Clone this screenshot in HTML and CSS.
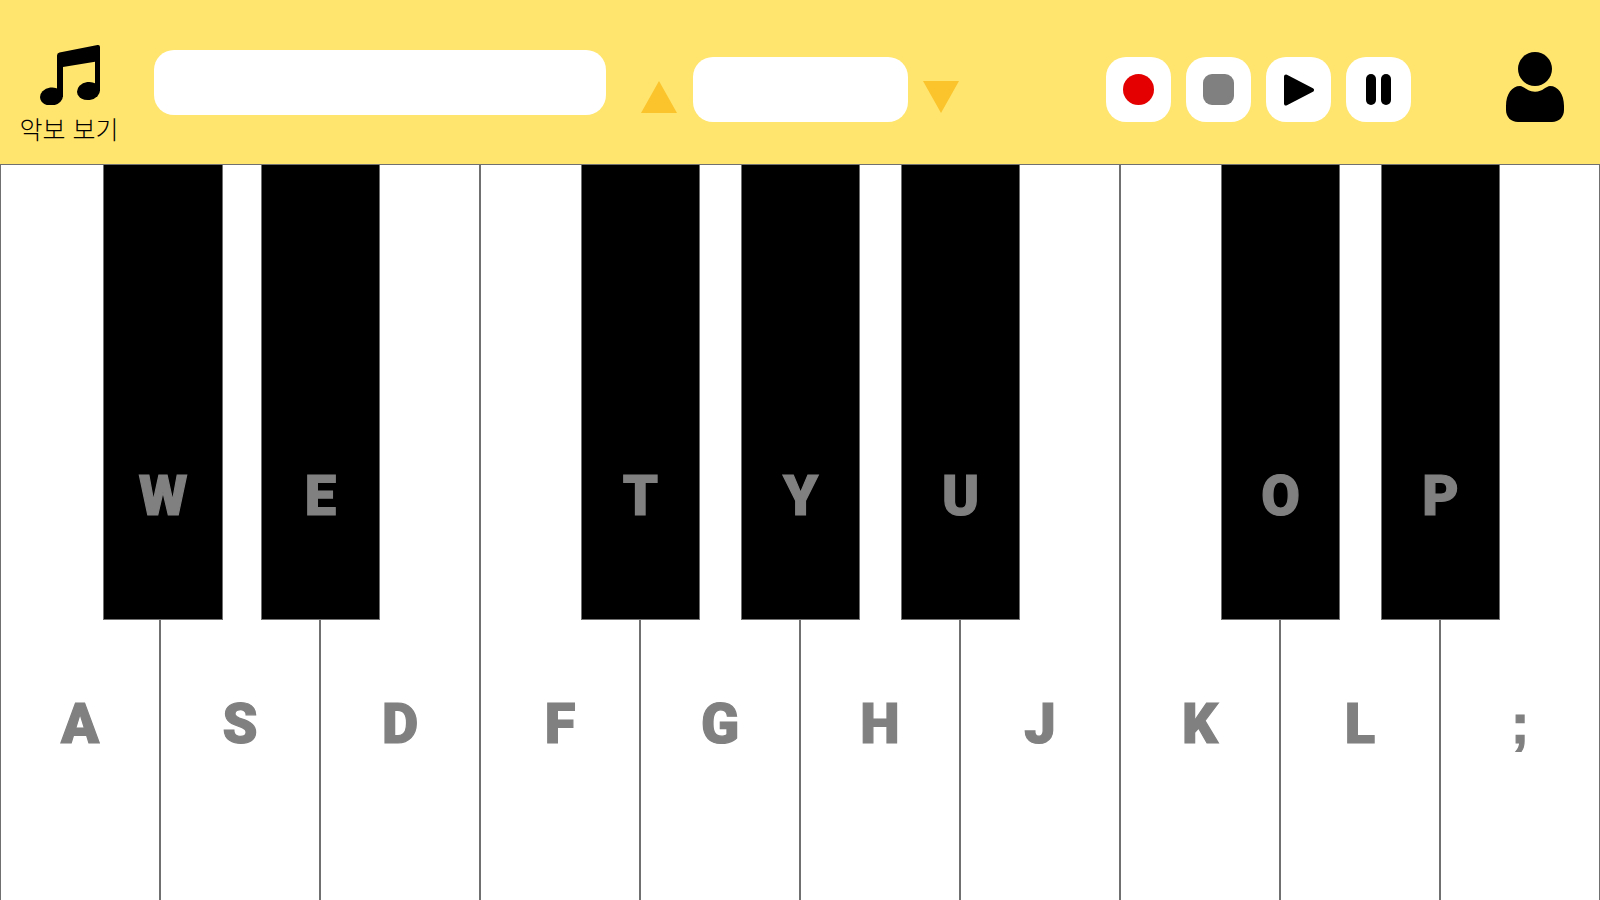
FILE: index.html
```html
<!DOCTYPE html>
<html lang="ko">
<head>
    <meta charset="UTF-8">
    <meta name="viewport" content="width=device-width, initial-scale=1.0">
    <title>Piano</title>
    <link rel="stylesheet" href="styles.css">
</head>
<body>
    <header class="topbar">
        <div class="score-link">
            <svg class="note-icon" viewBox="0 0 60 61" width="60" height="61">
                <path d="M17 11.500Q17 9 19.500 8.500L57.500 1Q60 .6 60 3V47H55V17.700L23 23V53H17Z"/>
                <ellipse cx="48.500" cy="47" rx="11.500" ry="9" transform="rotate(-8 48.500 47)"/>
                <ellipse cx="11.500" cy="52.500" rx="11.500" ry="9" transform="rotate(-8 11.500 52.500)"/>
            </svg>
            <span class="score-label">악보 보기</span>
        </div>
        <div class="title-box"></div>
        <div class="tempo">
            <div class="arrow arrow-up"></div>
            <div class="tempo-box"></div>
            <div class="arrow arrow-down"></div>
        </div>
        <div class="controls">
            <button class="ctrl-btn"><span class="record-dot"></span></button>
            <button class="ctrl-btn"><span class="stop-square"></span></button>
            <button class="ctrl-btn">
                <svg viewBox="0 0 32 32" width="32" height="32">
                    <path class="play-shape" d="M3 2.500L29 16L3 29.500Z"/>
                </svg>
            </button>
            <button class="ctrl-btn"><span class="pause-bar"></span><span class="pause-bar"></span></button>
        </div>
        <svg class="user-icon" viewBox="0 0 58 70" width="58" height="70">
            <circle cx="29" cy="17" r="17"/>
            <path d="M14 34C18 34 21 39.700 29 39.700C37 39.700 40 34 44 34C52 34 58 42 58 54V58C58 65 53 70 46 70H12C5 70 0 65 0 58V54C0 42 6 34 14 34Z"/>
        </svg>
    </header>

    <main class="keyboard">
        <div class="white-key">A</div>
        <div class="white-key">S</div>
        <div class="white-key">D</div>
        <div class="white-key">F</div>
        <div class="white-key">G</div>
        <div class="white-key">H</div>
        <div class="white-key">J</div>
        <div class="white-key">K</div>
        <div class="white-key">L</div>
        <div class="white-key semicolon">;</div>

        <div class="black-key key-w">W</div>
        <div class="black-key key-e">E</div>
        <div class="black-key key-t">T</div>
        <div class="black-key key-y">Y</div>
        <div class="black-key key-u">U</div>
        <div class="black-key key-o">O</div>
        <div class="black-key key-p">P</div>
    </main>
</body>
</html>
```

FILE: styles.css
```css
html, body {
    margin: 0;
    height: 100%;
    overflow: hidden;
}
body {
    display: flex;
    flex-direction: column;
    font-family: Roboto, "Noto Sans CJK KR", sans-serif;
    background-color: #ffffff;
}
.topbar {
    flex: 0 0 164px;
    display: flex;
    align-items: flex-start;
    background-color: #ffe56e;
}
.score-link {
    width: 98px;
    margin: 44px 0 0 20px;
    display: flex;
    flex-direction: column;
    align-items: center;
}
.note-icon {
    display: block;
    margin-left: 2px;
}
.score-label {
    margin-top: 7px;
    font-family: "Noto Sans CJK KR", sans-serif;
    font-weight: 300;
    font-size: 25px;
    line-height: 32px;
    white-space: nowrap;
    color: #000000;
}
.title-box {
    width: 452px;
    height: 65px;
    margin: 50px 0 0 36px;
    background: white;
    border-radius: 20px;
}
.tempo {
    display: flex;
    align-items: flex-start;
    margin: 57px 0 0 35px;
}
.tempo-box {
    width: 215px;
    height: 65px;
    margin: 0 15px 0 16px;
    background: white;
    border-radius: 20px;
}
.arrow {
    width: 0;
    height: 0;
    margin-top: 24px;
    border-left: 18.500px solid transparent;
    border-right: 18.500px solid transparent;
}
.arrow-up {
    border-bottom: 32px solid #fbc42c;
}
.arrow-down {
    border-top: 32px solid #fbc42c;
}
.controls {
    display: flex;
    gap: 15px;
    margin: 57px 0 0 147px;
}
.ctrl-btn {
    width: 65px;
    height: 65px;
    padding: 0;
    display: flex;
    align-items: center;
    justify-content: center;
    gap: 5px;
    background: white;
    border: none;
    border-radius: 20px;
}
.record-dot {
    width: 31px;
    height: 31px;
    background-color: #e40000;
    border-radius: 50%;
}
.stop-square {
    width: 31px;
    height: 31px;
    background-color: #808080;
    border-radius: 9px;
}
.play-shape {
    fill: #000000;
    stroke: #000000;
    stroke-width: 4;
    stroke-linejoin: round;
}
.pause-bar {
    width: 10px;
    height: 31px;
    background-color: #000000;
    border-radius: 5px;
}
.user-icon {
    margin: 52px 0 0 95px;
}
.keyboard {
    position: relative;
    flex: 1;
    display: flex;
}
.white-key {
    flex: 1;
    box-sizing: border-box;
    padding-top: 517px;
    border: 1px solid #707070;
    border-bottom: none;
    text-align: center;
    font-size: 56px;
    font-weight: 900;
    line-height: 84px;
    color: #808080;
    -webkit-text-stroke: 1.2px #808080;
}
.semicolon {
    font-family: "Liberation Sans", sans-serif;
    font-weight: 700;
}
.black-key {
    position: absolute;
    top: 0;
    width: 119px;
    height: 456px;
    padding-top: 292px;
    box-sizing: border-box;
    background-color: #000000;
    border: 1px solid #707070;
    text-align: center;
    font-size: 56px;
    font-weight: 900;
    line-height: 78px;
    color: #808080;
    -webkit-text-stroke: 1.2px #808080;
}
.key-w { left: 103px; width: 120px; }
.key-e { left: 261px; }
.key-t { left: 581px; }
.key-y { left: 741px; }
.key-u { left: 901px; }
.key-o { left: 1221px; }
.key-p { left: 1381px; }
```
